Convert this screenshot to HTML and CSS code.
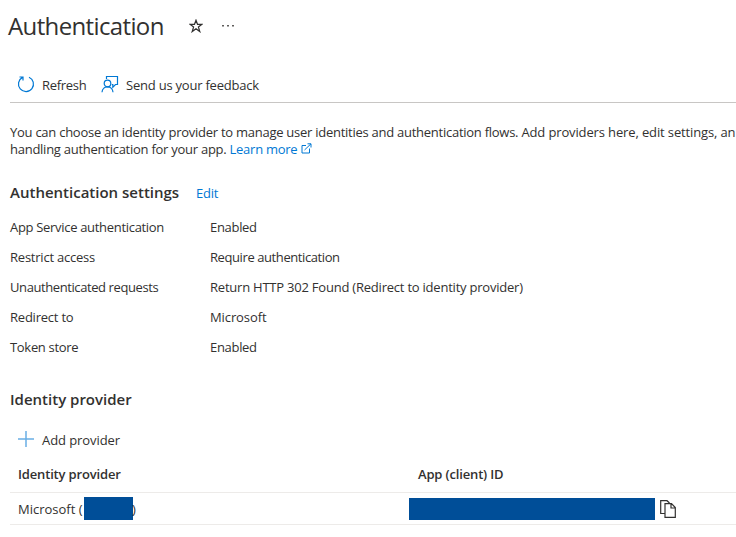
FILE: index.html
```html
<!DOCTYPE html>
<html lang="en">
<head>
<meta charset="utf-8">
<title>Authentication</title>
<link rel="stylesheet" href="styles.css">
</head>
<body>
<header class="title-bar">
  <h1>Authentication</h1>
  <svg class="star" width="14" height="14" viewBox="0 0 14 14"><path d="M7 1.200 8.500 5.300H13L9.400 8l1.400 4.600L7 9.800l-3.800 2.800L4.600 8 1 5.300h4.500z"/></svg>
  <svg class="more" width="12" height="4" viewBox="0 0 12 4"><path d="M0 1h2v1.500H0zM5 1h2v1.500H5zM10 1h2v1.500h-2z"/></svg>
</header>
<nav class="toolbar">
  <a class="command"><svg class="line-icon" width="18" height="18" viewBox="0 0 18 18"><path d="M5.500 2.400A7.500 7.500 0 1 0 12 2.200M2.500 2h3.500v3.500"/></svg><span class="refresh">Refresh</span></a>
  <a class="command"><svg class="line-icon" width="18" height="18" viewBox="0 0 18 18"><path d="M5.500 4V1.500h11v8H14.500l-2.700 2.700V9.500H10.800"/><circle cx="6.500" cy="8.500" r="3.300"/><path d="M1 17.200c.4-7 10.600-7 11 0"/></svg><span class="feedback">Send us your feedback</span></a>
</nav>
<main>
  <p class="intro">You can choose an identity provider to manage user identities and authentication flows. <span class="open">Add providers here, edit settings, an</span><br>handling authentication for your app. <a class="learn">Learn more</a><svg class="external" width="11" height="11" viewBox="0 0 11 11"><path d="M5 2.500H1v7.500h7.500V5.500M3.500 7 10 .8M6.500.8H10V4.500"/></svg></p>
  <div class="section-head"><h2>Authentication settings</h2><a class="edit">Edit</a></div>
  <dl class="settings">
    <dt>App Service authentication</dt><dd>Enabled</dd>
    <dt class="open">Restrict access</dt><dd class="tight">Require authentication</dd>
    <dt class="tight">Unauthenticated requests</dt><dd class="open">Return HTTP 302 Found (Redirect to identity provider)</dd>
    <dt class="open">Redirect to</dt><dd class="loose">Microsoft</dd>
    <dt>Token store</dt><dd>Enabled</dd>
  </dl>
  <h2 class="provider-title">Identity provider</h2>
  <a class="add"><svg width="16" height="16" viewBox="0 0 16 16"><path d="M8 0v16M0 8h16"/></svg><span>Add provider</span></a>
  <div class="table">
    <div class="row head"><span>Identity provider</span><span>App (client) ID</span></div>
    <div class="row"><span class="name"><span class="label">Microsoft (</span><i class="mask"></i><span class="label close">)</span></span><span class="client"><i class="mask wide"></i><svg class="copy" width="16" height="18" viewBox="0 0 16 18"><path d="M5 13.500H.7V.7H7L9.500 3M5 3.700h6.500l3.800 3.800v9.800H5zM11 4v4h4"/></svg></span></div>
  </div>
</main>
</body>
</html>
```
FILE: styles.css
```css
* { box-sizing: border-box; }
body {
  margin: 0;
  height: 537px;
  overflow: hidden;
  background: #fff;
  color: #323130;
  font: 13px/17px "Open Sans", "Noto Sans", sans-serif;
}
h1, h2, p, dl, dd { margin: 0; }
svg { flex: none; fill: none; }
.title-bar { display: flex; align-items: center; height: 52px; padding-left: 8px; }
h1 { width: 181px; font-size: 24px; font-weight: 400; line-height: 32px; letter-spacing: -0.63px; }
.star { stroke: #323130; stroke-width: 1.2; }
.more { margin-left: 19px; fill: #605e5c; }
.toolbar {
  display: flex;
  gap: 14px;
  height: 51px;
  margin-left: 10px;
  padding: 22px 0 0 7px;
  border-bottom: 1px solid #c8c6c4;
}
.command { display: flex; gap: 7px; height: 21px; align-items: center; letter-spacing: -0.22px; }
.command span { padding-top: 2px; }
.refresh { width: 45px; letter-spacing: -0.3px; }
.line-icon { margin-bottom: 2px; stroke: #0078d4; stroke-width: 1.2; }
main { padding-left: 10px; }
.intro { padding-top: 21px; height: 72px; white-space: nowrap; letter-spacing: -0.26px; }
.intro .open { letter-spacing: -0.13px; }
a { color: #323130; }
.learn, .edit { color: #0078d4; }
.edit { letter-spacing: -0.25px; }
.external { margin-left: 4px; stroke: #0078d4; }
.section-head { display: flex; align-items: center; height: 37px; }
h2 { font-size: 15px; font-weight: 600; line-height: 20px; }
.section-head h2 { width: 186px; padding-bottom: 4px; white-space: nowrap; }
.settings { display: grid; grid-template-columns: 200px 1fr; grid-auto-rows: 30px; align-items: center; white-space: nowrap; letter-spacing: -0.31px; }
.settings .open { letter-spacing: -0.22px; }
.settings .tight { letter-spacing: -0.41px; }
.settings .loose { letter-spacing: -0.1px; }
.provider-title { padding-top: 27px; height: 60px; }
.add { display: flex; align-items: center; gap: 8px; height: 35px; padding-left: 8px; letter-spacing: -0.08px; }
.add span { padding-top: 2px; }
.add svg { margin-bottom: 2px; stroke: #69afe5; stroke-width: 1.5; }
.row { display: grid; grid-template-columns: 400px 1fr; align-items: center; height: 32px; padding-left: 8px; border-bottom: 1px solid #edebe9; }
.head { height: 36px; font-weight: 600; letter-spacing: -0.16px; }
.name, .client { display: flex; align-items: center; }
.label { padding-top: 2px; }
.label:first-child { width: 66px; white-space: nowrap; }
.close { margin-left: -1px; }
.mask { width: 49px; height: 23px; background: #004e98; }
.wide { width: 246px; height: 22px; margin-left: -9px; }
.copy { margin-left: 5px; stroke: #323130; stroke-width: 1.2; }
```
